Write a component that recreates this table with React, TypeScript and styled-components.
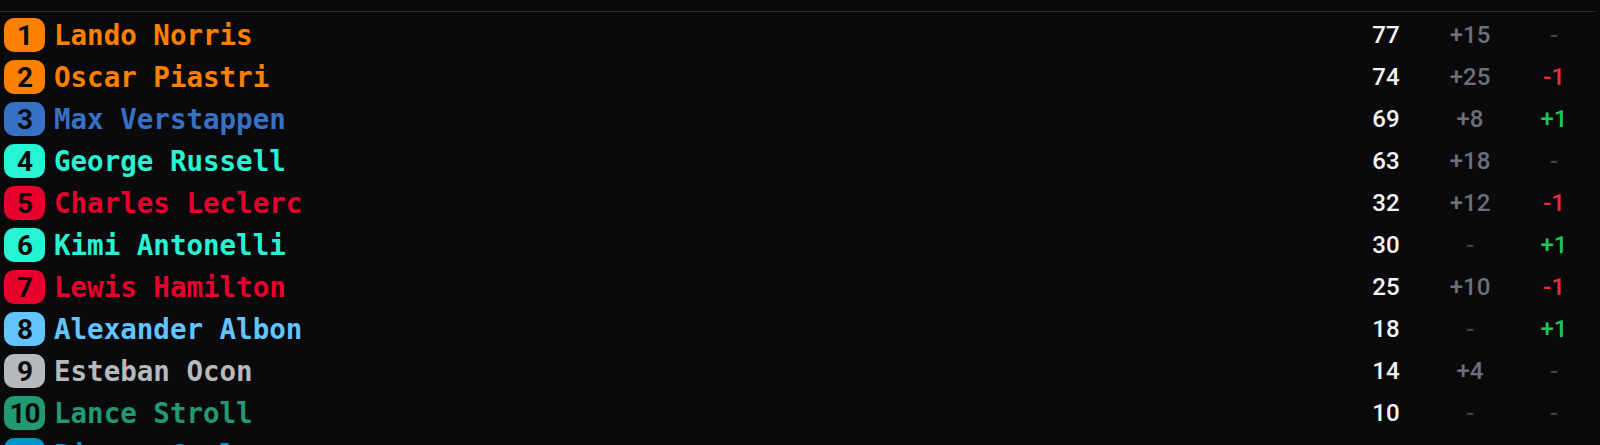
import React from "react";
import styled, { createGlobalStyle } from "styled-components";

const GlobalStyle = createGlobalStyle`
  html, body {
    margin: 0;
    padding: 0;
    background: #0a0a0c;
  }
  body {
    font-family: Roboto, "Liberation Sans", sans-serif;
    overflow: hidden;
  }
`;

type Driver = {
  pos: number;
  name: string;
  color: string;
  points: number;
  gain: string;
  change: number;
};

const drivers: Driver[] = [
  { pos: 1, name: "Lando Norris", color: "#ff8000", points: 77, gain: "+15", change: 0 },
  { pos: 2, name: "Oscar Piastri", color: "#ff8000", points: 74, gain: "+25", change: -1 },
  { pos: 3, name: "Max Verstappen", color: "#3671c6", points: 69, gain: "+8", change: 1 },
  { pos: 4, name: "George Russell", color: "#27f4d2", points: 63, gain: "+18", change: 0 },
  { pos: 5, name: "Charles Leclerc", color: "#e8002d", points: 32, gain: "+12", change: -1 },
  { pos: 6, name: "Kimi Antonelli", color: "#27f4d2", points: 30, gain: "-", change: 1 },
  { pos: 7, name: "Lewis Hamilton", color: "#e8002d", points: 25, gain: "+10", change: -1 },
  { pos: 8, name: "Alexander Albon", color: "#64c4ff", points: 18, gain: "-", change: 1 },
  { pos: 9, name: "Esteban Ocon", color: "#b6babd", points: 14, gain: "+4", change: 0 },
  { pos: 10, name: "Lance Stroll", color: "#229971", points: 10, gain: "-", change: 0 },
  { pos: 11, name: "Pierre Gasly", color: "#0093cc", points: 6, gain: "+6", change: 0 },
];

const Page = styled.div`
  width: 1596px;
  padding-top: 11px;
`;

const Table = styled.div`
  border-top: 1px solid #2a2a2f;
  padding-top: 2px;
  display: flex;
  flex-direction: column;
`;

const Row = styled.div`
  display: flex;
  align-items: center;
  height: 42px;
  padding-left: 4px;
`;

const Badge = styled.div<{ $color: string }>`
  flex: 0 0 41px;
  height: 34px;
  border-radius: 10px;
  background: ${(p) => p.$color};
  color: #0b0b0b;
  font-family: Roboto, "Liberation Sans", sans-serif;
  font-weight: 700;
  font-size: 28px;
  letter-spacing: -1px;
  display: flex;
  align-items: center;
  justify-content: center;
`;

const Name = styled.div<{ $color: string }>`
  flex: 1;
  margin-left: 9px;
  color: ${(p) => p.$color};
  font-family: "DejaVu Sans Mono", "Liberation Mono", monospace;
  font-size: 27.5px;
  font-weight: 700;
  white-space: nowrap;
`;

const Cell = styled.div<{ $tone: "white" | "gray" | "red" | "green" }>`
  flex: 0 0 84px;
  text-align: center;
  font-family: Roboto, "Liberation Sans", sans-serif;
  font-size: 24px;
  font-weight: 500;
  color: ${(p) =>
    p.$tone === "white"
      ? "#f4f4f5"
      : p.$tone === "gray"
      ? "#6b707c"
      : p.$tone === "red"
      ? "#ef2b3a"
      : "#1fc75a"};
`;

const DimDash = styled.span`
  color: #3f4450;
`;

export default function App() {
  return (
    <>
      <GlobalStyle />
      <Page>
        <Table>
          {drivers.map((d) => (
            <Row key={d.pos}>
              <Badge $color={d.color}>{d.pos}</Badge>
              <Name $color={d.color}>{d.name}</Name>
              <Cell $tone="white">{d.points}</Cell>
              <Cell $tone="gray">
                {d.gain === "-" ? <DimDash>-</DimDash> : d.gain}
              </Cell>
              <Cell $tone={d.change > 0 ? "green" : d.change < 0 ? "red" : "gray"}>
                {d.change === 0 ? (
                  <DimDash>-</DimDash>
                ) : d.change > 0 ? (
                  `+${d.change}`
                ) : (
                  `-${Math.abs(d.change)}`
                )}
              </Cell>
            </Row>
          ))}
        </Table>
      </Page>
    </>
  );
}
